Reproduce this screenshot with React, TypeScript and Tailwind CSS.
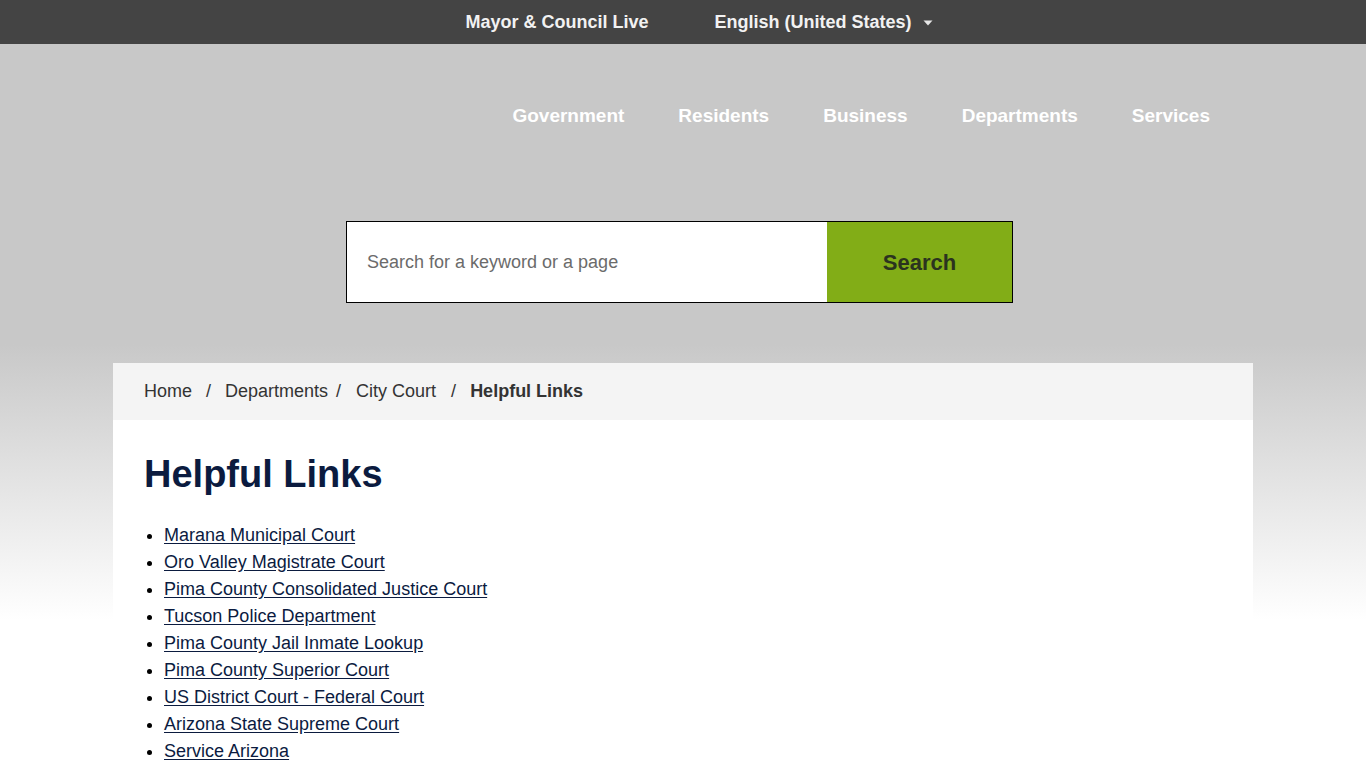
import React from "react";

const NAV_ITEMS = ["Government", "Residents", "Business", "Departments", "Services"];

const LINKS = [
  "Marana Municipal Court",
  "Oro Valley Magistrate Court",
  "Pima County Consolidated Justice Court",
  "Tucson Police Department",
  "Pima County Jail Inmate Lookup",
  "Pima County Superior Court",
  "US District Court - Federal Court",
  "Arizona State Supreme Court",
  "Service Arizona",
];

const TopBar = () => (
  <div className="h-[44px] bg-[#444444] flex items-center justify-center text-[18px] font-bold text-[#f2f2f2]">
    <a className="ml-[32px] mr-[66px]">Mayor &amp; Council Live</a>
    <a className="flex items-center">
      English (United States)
      <svg className="ml-[11px] mt-[1px]" width="10" height="6" viewBox="0 0 10 6">
        <path d="M0.5 0.5 L9.5 0.5 L5 5.5 Z" fill="#e6e6e6" />
      </svg>
    </a>
  </div>
);

const Header = () => (
  <div className="w-[1140px] mx-auto">
    <nav className="pt-[45px] h-[98px] flex justify-end items-center gap-[54px] pr-[43px]">
      {NAV_ITEMS.map((item) => (
        <a key={item} className="text-white font-bold text-[19px] leading-[53px]">
          {item}
        </a>
      ))}
    </nav>
    <div className="mt-[79px] flex">
      <div className="ml-[233px] flex w-[667px] h-[82px] border border-black">
        <div className="flex-1 bg-white flex items-center pl-[20px] text-[18px] text-[#6b6b6b]">
          Search for a keyword or a page
        </div>
        <button className="w-[185px] bg-[#82ad17] text-[22px] font-bold text-[#2b331f]">
          Search
        </button>
      </div>
    </div>
  </div>
);

const Breadcrumb = () => (
  <div className="h-[57px] bg-[#f4f4f4] flex items-center pl-[31px] text-[18px] text-[#333333]">
    <a>Home</a>
    <span className="ml-[14px] mr-[14px]">/</span>
    <a>Departments</a>
    <span className="ml-[8px] mr-[15px]">/</span>
    <a>City Court</a>
    <span className="ml-[15px] mr-[14px]">/</span>
    <span className="font-bold">Helpful Links</span>
  </div>
);

export default function App() {
  return (
    <div className="min-h-[768px] font-['Liberation_Sans',Arial,sans-serif] bg-white">
      <TopBar />
      <div className="bg-[linear-gradient(180deg,#c8c8c8_0px,#c8c8c8_300px,#ffffff_576px)] pb-[40px]">
        <Header />
        <main className="w-[1140px] mx-auto mt-[60px]">
          <Breadcrumb />
          <section className="bg-white px-[31px] pt-[33px] pb-[30px]">
            <h1 className="text-[38px] leading-[42px] font-bold text-[#0b1b3f]">Helpful Links</h1>
            <ul className="mt-[27px] list-disc pl-[20px] text-[18px] leading-[27px] text-[#0b1b3f]">
              {LINKS.map((link) => (
                <li key={link} className="marker:text-black">
                  <a className="underline underline-offset-[2px] cursor-pointer">{link}</a>
                </li>
              ))}
            </ul>
          </section>
        </main>
      </div>
    </div>
  );
}
